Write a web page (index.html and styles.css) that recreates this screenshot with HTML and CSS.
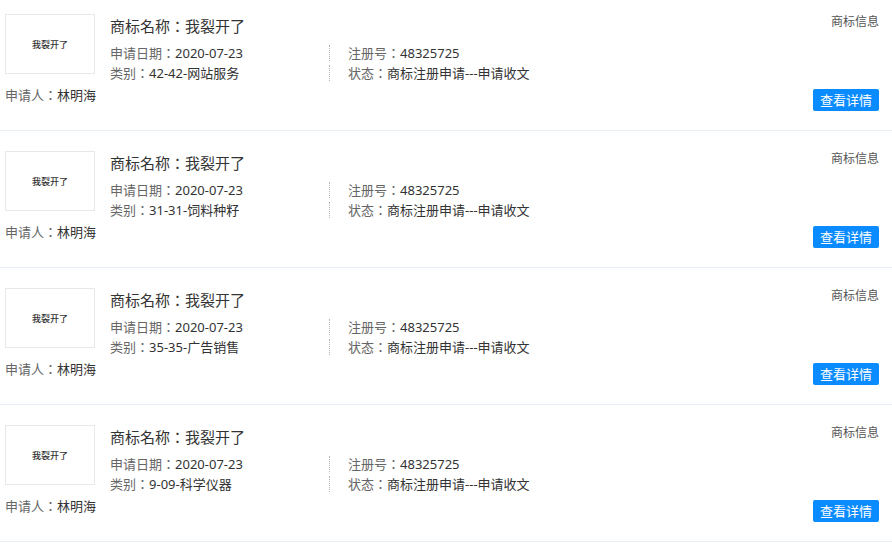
FILE: index.html
```html
<!DOCTYPE html>
<html lang="zh-CN">
<head>
    <meta charset="UTF-8">
    <meta name="viewport" content="width=device-width, initial-scale=1.0">
    <title>商标列表</title>
    <link rel="stylesheet" href="styles.css">
</head>
<body>
    <div class="tm-list">
        <div class="tm-item">
            <div class="tm-left">
                <div class="tm-pic">我裂开了</div>
                <div class="tm-owner"><span class="lbl">申请人：</span>林明海</div>
            </div>
            <div class="tm-main">
                <div class="tm-name"><span class="lbl-t">商标名称：</span>我裂开了</div>
                <div class="tm-line">
                    <div class="cell"><span class="lbl">申请日期：</span>2020-07-23</div>
                    <div class="cell cell-r"><span class="lbl">注册号：</span>48325725</div>
                </div>
                <div class="tm-line">
                    <div class="cell"><span class="lbl">类别：</span>42-42-网站服务</div>
                    <div class="cell cell-r"><span class="lbl">状态：</span>商标注册申请---申请收文</div>
                </div>
            </div>
            <div class="tm-side">
                <div class="tm-tag">商标信息</div>
                <a class="btn" href="#">查看详情</a>
            </div>
        </div>

        <div class="tm-item">
            <div class="tm-left">
                <div class="tm-pic">我裂开了</div>
                <div class="tm-owner"><span class="lbl">申请人：</span>林明海</div>
            </div>
            <div class="tm-main">
                <div class="tm-name"><span class="lbl-t">商标名称：</span>我裂开了</div>
                <div class="tm-line">
                    <div class="cell"><span class="lbl">申请日期：</span>2020-07-23</div>
                    <div class="cell cell-r"><span class="lbl">注册号：</span>48325725</div>
                </div>
                <div class="tm-line">
                    <div class="cell"><span class="lbl">类别：</span>31-31-饲料种籽</div>
                    <div class="cell cell-r"><span class="lbl">状态：</span>商标注册申请---申请收文</div>
                </div>
            </div>
            <div class="tm-side">
                <div class="tm-tag">商标信息</div>
                <a class="btn" href="#">查看详情</a>
            </div>
        </div>

        <div class="tm-item">
            <div class="tm-left">
                <div class="tm-pic">我裂开了</div>
                <div class="tm-owner"><span class="lbl">申请人：</span>林明海</div>
            </div>
            <div class="tm-main">
                <div class="tm-name"><span class="lbl-t">商标名称：</span>我裂开了</div>
                <div class="tm-line">
                    <div class="cell"><span class="lbl">申请日期：</span>2020-07-23</div>
                    <div class="cell cell-r"><span class="lbl">注册号：</span>48325725</div>
                </div>
                <div class="tm-line">
                    <div class="cell"><span class="lbl">类别：</span>35-35-广告销售</div>
                    <div class="cell cell-r"><span class="lbl">状态：</span>商标注册申请---申请收文</div>
                </div>
            </div>
            <div class="tm-side">
                <div class="tm-tag">商标信息</div>
                <a class="btn" href="#">查看详情</a>
            </div>
        </div>

        <div class="tm-item">
            <div class="tm-left">
                <div class="tm-pic">我裂开了</div>
                <div class="tm-owner"><span class="lbl">申请人：</span>林明海</div>
            </div>
            <div class="tm-main">
                <div class="tm-name"><span class="lbl-t">商标名称：</span>我裂开了</div>
                <div class="tm-line">
                    <div class="cell"><span class="lbl">申请日期：</span>2020-07-23</div>
                    <div class="cell cell-r"><span class="lbl">注册号：</span>48325725</div>
                </div>
                <div class="tm-line">
                    <div class="cell"><span class="lbl">类别：</span>9-09-科学仪器</div>
                    <div class="cell cell-r"><span class="lbl">状态：</span>商标注册申请---申请收文</div>
                </div>
            </div>
            <div class="tm-side">
                <div class="tm-tag">商标信息</div>
                <a class="btn" href="#">查看详情</a>
            </div>
        </div>
    </div>
</body>
</html>
```

FILE: styles.css
```css
body {
    margin: 0;
    background-color: #fff;
    font-family: "Noto Sans", "Noto Sans CJK SC", sans-serif;
    color: #333;
    font-size: 13px;
}
.tm-list {
    width: 892px;
}
.tm-item {
    display: flex;
    box-sizing: border-box;
    height: 137px;
    padding: 20px 13px 0 5px;
    border-bottom: 1px solid #e6edf4;
}
.tm-item:first-child {
    height: 131px;
    padding-top: 14px;
}
.tm-left {
    width: 90px;
    margin-right: 15px;
    white-space: nowrap;
}
.tm-pic {
    width: 90px;
    height: 60px;
    box-sizing: border-box;
    border: 1px solid #e8e8e8;
    display: flex;
    justify-content: center;
    align-items: center;
    font-family: "Noto Sans CJK SC", sans-serif;
    font-size: 9px;
    font-weight: 500;
    color: #333;
}
.tm-owner {
    margin-top: 11px;
    line-height: 20px;
}
/* labels use the TC cut (no locl) so the full-width colon sits centred */
.lbl,
.lbl-t {
    font-family: "Noto Sans CJK TC", "Noto Sans CJK SC", sans-serif;
    font-feature-settings: "locl" 0;
}
.lbl {
    color: #666;
}
.lbl-t {
    color: #333;
}
.tm-main {
    flex: 1;
}
.tm-name {
    font-size: 15px;
    line-height: 24px;
    color: #333;
}
.tm-line {
    display: flex;
    margin-top: 4px;
    line-height: 15px;
}
.tm-name + .tm-line {
    margin-top: 7px;
}
.tm-line .cell {
    width: 219px;
    white-space: nowrap;
}
.tm-line .cell-r {
    width: auto;
    border-left: 1px dotted #b5b5b5;
    padding-left: 18px;
}
.tm-side {
    display: flex;
    flex-direction: column;
    align-items: flex-end;
}
.tm-tag {
    font-size: 12px;
    line-height: 16px;
    color: #555;
}
.btn {
    margin-top: 59px;
    display: block;
    width: 66px;
    height: 22px;
    line-height: 22px;
    text-align: center;
    background-color: #0a8bff;
    color: #fff;
    border-radius: 2px;
    text-decoration: none;
    font-size: 13px;
}
```
